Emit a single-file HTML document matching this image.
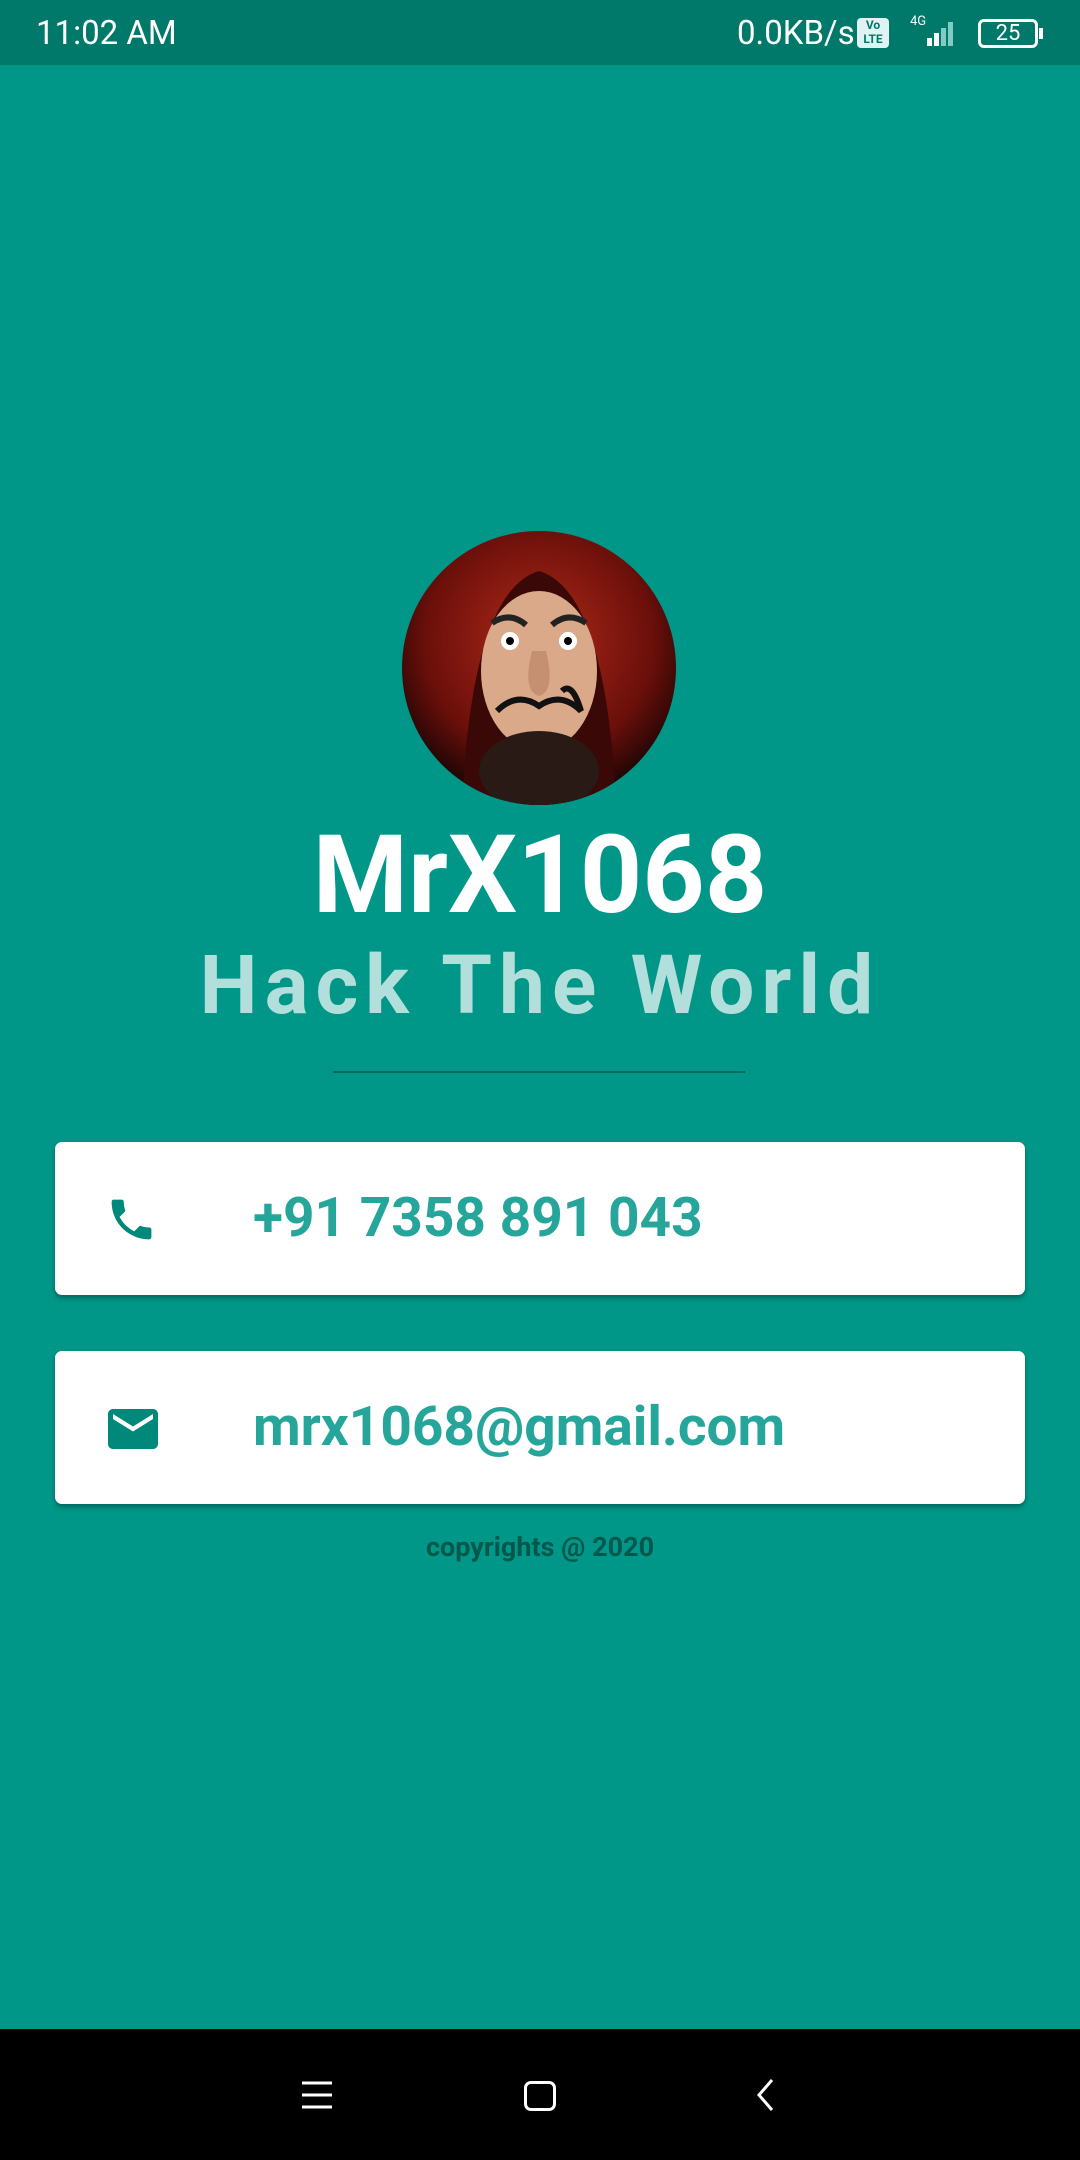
<!DOCTYPE html>
<html><head><meta charset="utf-8"><style>
*{margin:0;padding:0;box-sizing:border-box}
body{width:1080px;height:2160px;background:#009688;font-family:"Roboto","Liberation Sans",sans-serif;position:relative;overflow:hidden}
.status{position:absolute;top:0;left:0;width:1080px;height:65px;background:#00796B;color:#fff;font-size:33px}
.nav{position:absolute;left:0;top:2029px;width:1080px;height:131px;background:#000}
.card{position:absolute;left:55px;width:970px;height:153px;background:#fff;border-radius:7px;box-shadow:0 3px 5px rgba(0,0,0,.3)}
.card .t{position:absolute;left:198px;top:0;line-height:153px;font-size:55px;font-weight:bold;color:#26A69A}
</style></head><body>
<div class="status">
<span style="position:absolute;left:36px;top:14px">11:02 AM</span>
<span style="position:absolute;left:737px;top:14px">0.0KB/s</span>
<div style="position:absolute;left:857px;top:18px;width:32px;height:30px;background:#e0f2f1;border-radius:4px;color:#00796B;font-size:12px;font-weight:bold;text-align:center;line-height:14px">Vo<br>LTE</div>
<span style="position:absolute;left:910px;top:14px;font-size:13px">4G</span>
<svg style="position:absolute;left:905px;top:18px" width="56" height="30"><rect x="22" y="20" width="5" height="8" fill="#fff"/><rect x="29" y="15" width="5" height="13" fill="#fff"/><rect x="36" y="10" width="5" height="18" fill="#80cbc4"/><rect x="43" y="4" width="5" height="24" fill="#80cbc4"/></svg>
<div style="position:absolute;left:978px;top:19px;width:60px;height:29px;border:3px solid #fff;border-radius:6px;font-size:22px;text-align:center;line-height:23px">25</div>
<div style="position:absolute;left:1039px;top:28px;width:4px;height:11px;background:#fff"></div>
</div>
<svg style="position:absolute;left:402px;top:531px" width="274" height="274" viewBox="0 0 274 274">
<defs><radialGradient id="g" cx="50%" cy="40%" r="60%"><stop offset="0" stop-color="#b02a1a"/><stop offset=".7" stop-color="#6a0f0a"/><stop offset="1" stop-color="#1a0505"/></radialGradient>
<clipPath id="c"><circle cx="137" cy="137" r="137"/></clipPath></defs>
<g clip-path="url(#c)"><rect width="274" height="274" fill="url(#g)"/>
<path d="M60 274 Q70 60 137 40 Q204 60 214 274Z" fill="#3a0806"/>
<ellipse cx="137" cy="140" rx="58" ry="80" fill="#d9a98a"/>
<ellipse cx="137" cy="240" rx="60" ry="40" fill="#2a1a15"/>
<circle cx="108" cy="110" r="9" fill="#fff"/><circle cx="166" cy="110" r="9" fill="#fff"/>
<circle cx="108" cy="110" r="4" fill="#000"/><circle cx="166" cy="110" r="4" fill="#000"/>
<path d="M90 92 Q108 80 124 94 M150 94 Q166 80 184 92" stroke="#222" stroke-width="6" fill="none"/>
<path d="M95 180 Q115 160 137 175 Q159 160 179 180 Q170 150 160 160" stroke="#111" stroke-width="6" fill="none"/>
<path d="M130 120 Q120 160 137 165 Q154 160 144 120" fill="#c58f72"/></g></svg>
<div style="position:absolute;left:0;width:1080px;top:815px;text-align:center;color:#fff;font-weight:bold;font-size:109px;line-height:120px">MrX1068</div>
<div style="position:absolute;left:0;width:1080px;top:936px;text-align:center;color:#B2DFDB;font-weight:bold;font-size:82px;letter-spacing:7px;line-height:100px">Hack The World</div>
<div style="position:absolute;left:333px;top:1071px;width:412px;height:2px;background:#00695C"></div>
<div class="card" style="top:1142px">
<svg style="position:absolute;left:50px;top:51px" width="53" height="53" viewBox="0 0 24 24"><path fill="#00897B" d="M6.6 10.8c1.4 2.8 3.8 5.1 6.6 6.6l2.2-2.2c.3-.3.7-.4 1-.2 1.1.4 2.300.6 3.600.6.6 0 1 .4 1 1V20c0 .6-.4 1-1 1C10.6 21 3 13.4 3 4c0-.6.4-1 1-1h3.5c.6 0 1 .4 1 1 0 1.3.2 2.5.6 3.6.1.3 0 .7-.2 1L6.6 10.8z"/></svg>
<div class="t">+91 7358 891 043</div></div>
<div class="card" style="top:1351px">
<svg style="position:absolute;left:48px;top:48px" width="60" height="60" viewBox="0 0 24 24"><path fill="#00897B" d="M20 4H4c-1.1 0-2 .9-2 2v12c0 1.1.9 2 2 2h16c1.1 0 2-.9 2-2V6c0-1.1-.9-2-2-2zm0 4l-8 5-8-5V6l8 5 8-5v2z"/></svg>
<div class="t">mrx1068@gmail.com</div></div>
<div style="position:absolute;left:0;width:1080px;top:1531px;text-align:center;color:#00574B;font-weight:bold;font-size:27px">copyrights @ 2020</div>
<div class="nav">
<svg style="position:absolute;left:300px;top:50px" width="34" height="32"><path d="M2 4H32M2 16H32M2 28H32" stroke="#fff" stroke-width="3"/></svg>
<div style="position:absolute;left:524px;top:52px;width:32px;height:30px;border:3px solid #fff;border-radius:7px"></div>
<svg style="position:absolute;left:754px;top:48px" width="24" height="36"><path d="M18 3L5 18L18 33" stroke="#fff" stroke-width="3" fill="none"/></svg>
</div>
</body></html>
